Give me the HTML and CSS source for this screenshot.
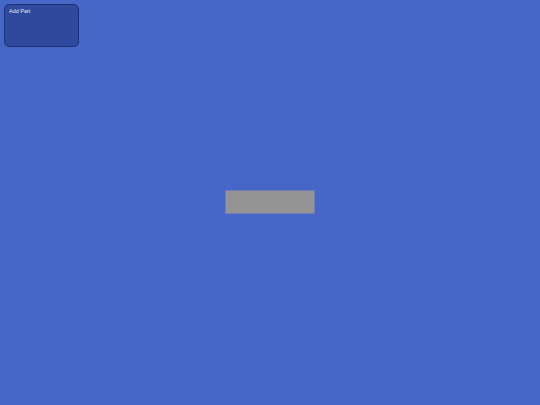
FILE: index.html
```html
<!DOCTYPE html>
<html>
<head>
<meta charset="utf-8">
<link rel="stylesheet" href="styles.css">
</head>
<body>
<div class="stage">
  <div class="panel"><span class="panel-title">Add Part</span></div>
  <div class="center">
    <div class="part"></div>
  </div>
</div>
</body>
</html>
```
FILE: styles.css
```css
html, body {
  margin: 0;
  padding: 0;
  width: 540px;
  height: 405px;
  overflow: hidden;
  background: #4666c8;
  font-family: "Liberation Sans", Arial, sans-serif;
}
.stage {
  position: relative;
  width: 540px;
  height: 405px;
}
.panel {
  position: absolute;
  left: 4px;
  top: 4px;
  width: 75px;
  height: 43px;
  box-sizing: border-box;
  background: #2f4a9c;
  border: 1px solid #1f3272;
  border-radius: 5px;
  padding: 3px 4px;
}
.panel-title {
  display: block;
  color: #e6e9f4;
  font-size: 5.5px;
  line-height: 7px;
}
.center {
  display: flex;
  width: 540px;
  height: 405px;
  align-items: flex-start;
  justify-content: flex-start;
  padding: 191px 0 0 226px;
  box-sizing: border-box;
}
.part {
  width: 88px;
  height: 22px;
  background: #949494;
  box-shadow: 0 0 0 1px rgba(140,140,170,0.6);
}
```
